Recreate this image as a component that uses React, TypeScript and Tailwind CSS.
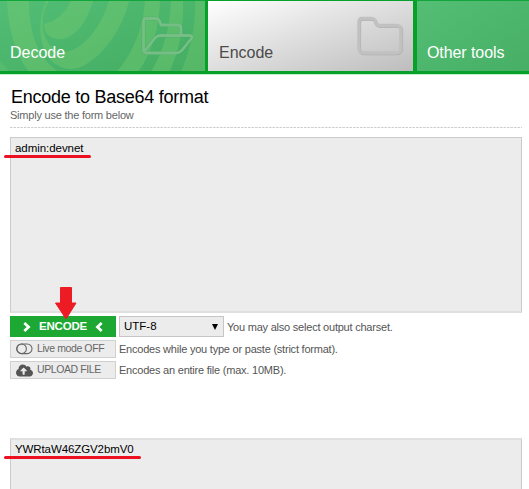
import React from "react";
import { FaCloudUploadAlt } from "react-icons/fa";

function Rings() {
  return (
    <svg className="absolute inset-0" width="208" height="75" viewBox="0 0 208 75" fill="#78cc70" fillOpacity=".38">
      <path d="M7 0C8 28 16 56 32 75H65C38 61 29 32 29 0Z" />
      <path d="M0 60C5 64 9 69 12 75H0Z" fillOpacity=".25" />
      <path d="M46 0C38 18 38 39 47 54C56 68 71 71 83 65C104 54 123 27 129 0H109C103 20 89 43 70 50C55 54 44 42 43 25C42 14 45 6 49 0Z" />
      <path d="M71 0C66 11 57 20 44 23C44 33 51 39 62 38C78 35 88 18 93 0Z" />
      <path d="M145 0C143 29 132 55 113 75H135C151 55 159 30 160 0Z" />
      <path d="M171 0C170 29 162 55 148 75H167C178 55 184 29 183 0Z" />
      <path d="M195 0C196 28 189 54 179 75H205V0Z" fillOpacity=".34" />
    </svg>
  );
}

function OpenFolder() {
  const outline = "M3.5 35V6Q3.5 3.5 6 3.5H16Q18.5 3.5 19.5 6L21 10H38Q41 10 41 13V20M4 37L15 23Q17 20.5 20 20.5H49Q54 20.5 51 24L43 34Q40 38 36 38H7Q3.5 38 3.5 34";
  return (
    <svg className="absolute left-[140px] top-[15px]" width="56" height="42" viewBox="0 0 56 42" fill="none" strokeLinejoin="round">
      <path d={outline} stroke="#36985b" strokeOpacity=".22" strokeWidth="4.2" />
      <path d={outline} stroke="#76be86" strokeWidth="2.8" />
    </svg>
  );
}

function ClosedFolder() {
  const outline = "M6 3.5H15Q18.5 3.5 19.5 7Q20.5 10.5 23 10.5H40Q45 10.5 45 15V33Q45 38 40 38H8Q3 38 3 33V7Q3 3.5 6 3.5Z";
  return (
    <svg className="absolute left-[356px] top-[15px]" width="49" height="43" viewBox="0 0 49 43" fill="none">
      <path d={outline} stroke="#a8a8a8" strokeWidth="3.2" transform="translate(.5 .6)" />
      <path d={outline} stroke="#c1c1c1" strokeWidth="3.4" />
    </svg>
  );
}

function Header() {
  return (
    <header className="relative flex h-[75px] border-b border-[#c4efc9] bg-[#05a12b] text-base leading-5">
      <div className="h-[71px] w-[205px] border-t border-[#12a53b] bg-linear-to-br from-[#52bd75] to-[#44ad62] pl-[10px] pt-[42px] text-white">
        <span className="relative z-10">Decode</span>
      </div>
      <div className="ml-[3px] mt-px h-[70px] w-[205px] bg-linear-to-br from-white to-[#bdbdbd] pl-[11px] pt-[42px] text-[#4b4b4b]">Encode</div>
      <div className="ml-1 h-[71px] flex-1 border-t border-[#12a53b] bg-linear-to-br from-[#54be75] to-[#46af65] pl-[10px] pt-[42px] tracking-[-0.08px] text-white">Other tools</div>
      <div className="absolute left-0 top-px h-[70px] w-[205px] overflow-hidden"><Rings /></div>
      <OpenFolder />
      <ClosedFolder />
    </header>
  );
}

function Chevron({ flipped = false }: { flipped?: boolean }) {
  return (
    <svg className={flipped ? "rotate-180" : ""} width="8" height="10" viewBox="0 0 8 10" fill="none" stroke="#fff" strokeWidth="2.7">
      <path d="M1.3 1L5.6 5L1.3 9" />
    </svg>
  );
}

function ToggleIcon() {
  return (
    <svg className="shrink-0" width="17" height="12" viewBox="0 0 17 12" fill="none" stroke="#666" strokeWidth="1.1">
      <rect x=".8" y="1" width="15.2" height="9.6" rx="4.8" />
      <circle cx="5.6" cy="5.8" r="4.8" />
    </svg>
  );
}

const smallButton = "flex h-[18px] w-[106px] items-center border border-[#d0d0d0] bg-[#ececec] pl-[5px] text-[10.5px] leading-none tracking-[-0.4px] text-[#666]";
const hint = "ml-[3px] whitespace-nowrap text-[11px] leading-4 tracking-[-0.22px] text-[#555]";

export default function App() {
  return (
    <div className="h-[489px] w-[529px] overflow-hidden bg-white font-['Liberation_Sans',Arial,sans-serif] text-black">
      <Header />
      <main className="relative pl-[10px] pr-[7px]">
        <h1 className="pl-px pt-3 text-[18px] leading-5 tracking-[-0.25px]">Encode to Base64 format</h1>
        <p className="mt-px text-[11px] leading-[14px] tracking-[-0.22px] text-[#666]">Simply use the form below</p>
        <svg className="mt-[5px] block" width="512" height="1"><path d="M0 .5H512" stroke="#cecece" strokeDasharray="2.5 1" /></svg>
        <div className="mt-[9px] h-[176px] border border-b-2 border-[#cbcbcb] border-b-[#e0e0e0] bg-[#ececec] pl-1 pt-[3px] text-[11.5px] leading-[15px] tracking-[-0.05px]">admin:devnet</div>
        <div className="mt-[3px] flex h-[21px] items-center">
          <button className="flex h-[21px] w-[106px] items-center justify-center gap-[8px] bg-[#1ca832] text-[11.5px] font-bold tracking-[-0.2px] text-white">
            <Chevron />ENCODE<Chevron flipped />
          </button>
          <div className="ml-[3px] flex h-[21px] w-[105px] items-center justify-between border border-[#c6c6c6] bg-[#ececec] pl-[4px] pr-[5px] text-[11.5px]">
            <span>UTF-8</span>
            <svg width="6" height="6" viewBox="0 0 6 6"><path d="M0 0H6L3 6Z" fill="#000" /></svg>
          </div>
          <span className={hint}>You may also select output charset.</span>
        </div>
        <div className="mt-[3px] flex items-center">
          <button className={smallButton}><ToggleIcon /><span className="ml-[4px] whitespace-nowrap pb-px">Live mode OFF</span></button>
          <span className={hint}>Encodes while you type or paste (strict format).</span>
        </div>
        <div className="mt-[3px] flex items-center">
          <button className={smallButton}><FaCloudUploadAlt className="w-[17px] shrink-0 text-[15px] text-[#555]" /><span className="ml-[4px] whitespace-nowrap pb-px">UPLOAD FILE</span></button>
          <span className={hint}>Encodes an entire file (max. 10MB).</span>
        </div>
        <div className="mt-[59px] h-[60px] border border-t-2 border-[#cbcbcb] border-t-[#e0e0e0] bg-[#ececec] pl-1 pt-[2px] text-[11.5px] leading-[15px] tracking-[-0.1px]">YWRtaW46ZGV2bmV0</div>
        <svg className="absolute left-0 top-0" width="529" height="414" viewBox="0 75 529 414">
          <path d="M5.5 156.5H89.5M5.5 457.5H139.5" stroke="#ed1021" strokeWidth="3" strokeLinecap="round" />
          <path d="M60.5 287.5H71.5V303H76L66 319L55.5 303H60.5Z" fill="#ed1c24" stroke="#ed1c24" strokeLinejoin="round" />
        </svg>
      </main>
    </div>
  );
}
